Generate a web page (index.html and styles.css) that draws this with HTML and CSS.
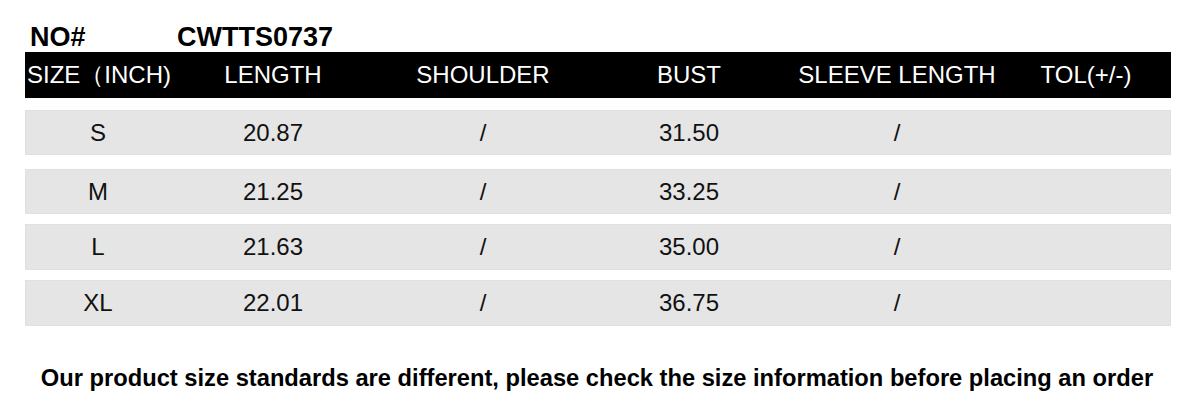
FILE: index.html
```html
<!DOCTYPE html>
<html lang="en">
<head>
<meta charset="utf-8">
<title>Size chart CWTTS0737</title>
<link rel="stylesheet" href="styles.css">
</head>
<body>
<div class="page">
  <div class="title">
    <span class="title-label">NO#</span>
    <span class="title-code">CWTTS0737</span>
  </div>
  <div class="table">
    <div class="row head">
      <div class="cell first">SIZE（INCH)</div>
      <div class="cell">LENGTH</div>
      <div class="cell">SHOULDER</div>
      <div class="cell">BUST</div>
      <div class="cell">SLEEVE LENGTH</div>
      <div class="cell">TOL(+/-)</div>
    </div>
    <div class="row data r1">
      <div class="cell">S</div>
      <div class="cell">20.87</div>
      <div class="cell">/</div>
      <div class="cell">31.50</div>
      <div class="cell">/</div>
      <div class="cell"></div>
    </div>
    <div class="row data r2">
      <div class="cell">M</div>
      <div class="cell">21.25</div>
      <div class="cell">/</div>
      <div class="cell">33.25</div>
      <div class="cell">/</div>
      <div class="cell"></div>
    </div>
    <div class="row data r3">
      <div class="cell">L</div>
      <div class="cell">21.63</div>
      <div class="cell">/</div>
      <div class="cell">35.00</div>
      <div class="cell">/</div>
      <div class="cell"></div>
    </div>
    <div class="row data r4">
      <div class="cell">XL</div>
      <div class="cell">22.01</div>
      <div class="cell">/</div>
      <div class="cell">36.75</div>
      <div class="cell">/</div>
      <div class="cell"></div>
    </div>
  </div>
  <p class="note">Our product size standards are different, please check the size information before placing an order</p>
</div>
</body>
</html>
```
FILE: styles.css
```css
html, body {
  margin: 0;
  padding: 0;
  background: #ffffff;
}
.page {
  width: 1194px;
  height: 414px;
  font-family: "Liberation Sans", Arial, sans-serif;
  color: #111111;
}
.title {
  display: flex;
  padding: 22px 0 0 30px;
  height: 30px;
  line-height: 30px;
  font-size: 27px;
  font-weight: bold;
  color: #000;
}
.title-label {
  width: 147px;
}
.table {
  margin-left: 25px;
  width: 1146px;
}
.row {
  display: grid;
  grid-template-columns: 146px 204px 216px 196px 220px 158px;
  align-items: center;
  font-size: 24px;
}
.cell {
  text-align: center;
}
.head {
  background: #000;
  color: #fff;
  height: 46px;
  margin-bottom: 12px;
}
.head .first {
  text-align: left;
  padding-left: 2px;
  white-space: nowrap;
}
.data {
  background: #e5e5e5;
  height: 45px;
  box-shadow: inset 0 0 0 1px #e0e0e0;
}
.r1 { margin-bottom: 14px; }
.r2 { margin-bottom: 10px; }
.r3 { margin-bottom: 10px; height: 46px; }
.r4 { height: 46px; }
.note {
  margin: 0;
  padding-top: 39px;
  text-align: center;
  font-size: 23.7px;
  font-weight: bold;
  color: #000;
  white-space: nowrap;
}
```
